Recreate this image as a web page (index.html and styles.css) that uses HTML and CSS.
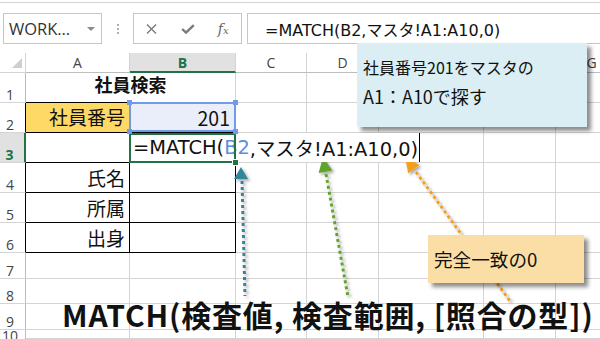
FILE: index.html
```html
<!DOCTYPE html>
<html lang="ja">
<head>
<meta charset="utf-8">
<title>MATCH</title>
<link rel="stylesheet" href="styles.css">
</head>
<body>
<div class="topline"></div>
<div class="fbar">
  <div class="namebox"><span>WORK…</span><span class="dd"></span></div>
  <div class="grip"><i></i><i></i><i></i></div>
  <div class="btns">
    <span class="slot"><svg width="11" height="10" viewBox="0 0 11 10"><path d="M1 0.5 L10 9.5 M10 0.5 L1 9.5" stroke="#7a7a7a" stroke-width="1.4" fill="none"/></svg></span>
    <span class="slot"><svg width="14" height="10" viewBox="0 0 14 10"><path d="M1.2 5 L5 8.6 L12.8 1.2" stroke="#7a7a7a" stroke-width="2.4" fill="none"/></svg></span>
    <span class="slot fx"><span class="fxf">f</span><span class="fxx">x</span></span>
  </div>
  <div class="finput">=MATCH(B2,マスタ!A1:A10,0)</div>
</div>

<div class="sheet">
  <div class="c corner"><span class="tri"></span></div>
  <div class="c ch">A</div>
  <div class="c ch sel">B</div>
  <div class="c ch">C</div>
  <div class="c ch">D</div>
  <div class="c ch"></div>
  <div class="c ch"></div>
  <div class="c ch">G</div>

  <div class="c rh">1</div>
  <div class="c title bb">社員検索</div>
  <div class="c"></div><div class="c"></div><div class="c"></div><div class="c"></div><div class="c"></div>

  <div class="c rh blk">2</div>
  <div class="c t lbl yellow">社員番号</div>
  <div class="c t num b2">201<span class="hd h1"></span><span class="hd h2"></span><span class="hd h3"></span><span class="hd h4"></span></div>
  <div class="c"></div><div class="c"></div><div class="c"></div><div class="c"></div><div class="c"></div>

  <div class="c rh sel">3</div>
  <div class="c t"></div>
  <div class="c t b3"><span class="edit">=MATCH(<span class="ref">B2</span>,マスタ!A1:A10,0)</span><span class="gh"></span></div>
  <div class="c"></div><div class="c"></div><div class="c"></div><div class="c"></div><div class="c"></div>

  <div class="c rh blk">4</div>
  <div class="c t lbl">氏名</div>
  <div class="c t"></div>
  <div class="c"></div><div class="c"></div><div class="c"></div><div class="c"></div><div class="c"></div>

  <div class="c rh blk">5</div>
  <div class="c t lbl">所属</div>
  <div class="c t"></div>
  <div class="c"></div><div class="c"></div><div class="c"></div><div class="c"></div><div class="c"></div>

  <div class="c rh blk">6</div>
  <div class="c t lbl">出身</div>
  <div class="c t"></div>
  <div class="c"></div><div class="c"></div><div class="c"></div><div class="c"></div><div class="c"></div>

  <div class="c rh">7</div>
  <div class="c"></div><div class="c"></div><div class="c"></div><div class="c"></div><div class="c"></div><div class="c"></div><div class="c"></div>

  <div class="c rh">8</div>
  <div class="c"></div><div class="c"></div><div class="c"></div><div class="c"></div><div class="c"></div><div class="c"></div><div class="c"></div>

  <div class="c rh">9</div>
  <div class="c"></div><div class="c"></div><div class="c"></div><div class="c"></div><div class="c"></div><div class="c"></div><div class="c"></div>

  <div class="c rh r10">10</div>
  <div class="c"></div><div class="c"></div><div class="c"></div><div class="c"></div><div class="c"></div><div class="c"></div><div class="c"></div>
</div>

<svg class="arrows" width="600" height="339" viewBox="0 0 600 339">
  <defs>
    <filter id="sh" x="-50%" y="-50%" width="200%" height="200%">
      <feDropShadow dx="2" dy="2" stdDeviation="1.4" flood-color="#000" flood-opacity="0.35"/>
    </filter>
  </defs>
  <g filter="url(#sh)">
    <line x1="242" y1="181" x2="245" y2="296" stroke="#31859b" stroke-width="3" stroke-dasharray="3 3"/>
    <polygon points="241,167 234,179 248,179" fill="#31859b"/>
    <line x1="326" y1="174" x2="348" y2="297" stroke="#62a32e" stroke-width="3" stroke-dasharray="3 3"/>
    <polygon points="323,157 332.4,170.4 318.6,173" fill="#62a32e"/>
    <line x1="416" y1="172" x2="510" y2="301" stroke="#f59d1f" stroke-width="3" stroke-dasharray="3 3"/>
    <polygon points="405,157 419.6,165.1 408.2,173.3" fill="#f59d1f"/>
  </g>
</svg>

<div class="note note-blue">
  <div class="l1">社員番号201をマスタの</div>
  <div class="l2">A1：A10で探す</div>
</div>
<div class="note note-orange">完全一致の0</div>

<div class="syntax">MATCH(検査値, 検査範囲, [照合の型])</div>
</body>
</html>
```

FILE: styles.css
```css
html, body {
  margin: 0;
  padding: 0;
}
body {
  width: 600px;
  height: 339px;
  overflow: hidden;
  background: #fff;
  position: relative;
  font-family: "Noto Sans CJK JP", sans-serif;
  color: #111;
}

/* ---------- formula bar ---------- */
.topline {
  height: 1px;
  margin-top: 2px;
  background: #d4d4d4;
}
.fbar {
  display: flex;
  height: 31px;
  margin-top: 10px;
  margin-bottom: 9px;
}
.namebox {
  margin-left: 3px;
  width: 99px;
  box-sizing: border-box;
  border: 1px solid #c6c6c6;
  display: flex;
  align-items: center;
  padding-left: 5px;
  font-family: "Open Sans", sans-serif;
  font-size: 16.5px;
  color: #333;
}
.dd {
  margin-left: auto;
  margin-right: 6px;
  width: 0;
  height: 0;
  border-left: 4px solid transparent;
  border-right: 4px solid transparent;
  border-top: 4px solid #8a8a8a;
}
.grip {
  width: 31px;
  display: flex;
  flex-direction: column;
  align-items: center;
  justify-content: center;
  gap: 2px;
}
.grip i {
  display: block;
  width: 2px;
  height: 2px;
  background: #b0b0b0;
}
.btns {
  width: 109px;
  box-sizing: border-box;
  border: 1px solid #c6c6c6;
  display: flex;
  align-items: center;
}
.slot {
  width: 36px;
  display: flex;
  justify-content: center;
  align-items: center;
}
.fx {
  font-family: "DejaVu Serif", serif;
  font-style: italic;
  color: #666;
  font-size: 14px;
  align-items: baseline;
}
.fxx {
  font-size: 10px;
}
.finput {
  flex: 1;
  margin-left: 5px;
  border: 1px solid #c6c6c6;
  border-right: none;
  display: flex;
  align-items: center;
  padding-left: 17px;
  font-family: "DejaVu Sans", "Noto Sans CJK JP", sans-serif;
  font-size: 16px;
  color: #111;
  white-space: nowrap;
}

/* ---------- sheet ---------- */
.sheet {
  display: grid;
  grid-template-columns: 26px 104px 106px 71px 72px 105px 72px 72px;
  grid-template-rows: 20px 30px 30px 30px 30px 30px 30px 26px 25px 26px 9px;
  overflow: hidden;
}
.c {
  box-sizing: border-box;
  border-right: 1px solid #d4d4d4;
  border-bottom: 1px solid #d4d4d4;
  display: flex;
  align-items: center;
  justify-content: flex-end;
  min-width: 0;
}
.corner {
  align-items: flex-end;
  padding: 0 3px 4px 0;
}
.tri {
  width: 0;
  height: 0;
  border-left: 10px solid transparent;
  border-bottom: 10px solid #cfcfcf;
}
.ch {
  justify-content: center;
  font-family: "Open Sans", sans-serif;
  font-size: 14px;
  color: #444;
  border-bottom-color: #bdbdbd;
}
.ch.sel {
  background: #e1e1e1;
  color: #217346;
  font-weight: bold;
  border-bottom: 2px solid #217346;
}
.rh {
  justify-content: center;
  align-items: flex-end;
  padding-right: 5px;
  font-family: "Open Sans", sans-serif;
  font-size: 14px;
  line-height: 14px;
  color: #444;
  border-right-color: #bdbdbd;
}
.rh.blk {
  border-right-color: #000;
}
.rh.sel {
  background: #e1e1e1;
  color: #217346;
  font-weight: bold;
  border-right: 2px solid #217346;
}
.rh.r10 {
  align-items: flex-start;
  padding-top: 1px;
  line-height: 10px;
  overflow: hidden;
  border-bottom: none;
}

.title {
  grid-column: span 2;
  justify-content: center;
  font-weight: bold;
  font-size: 18px;
  padding-bottom: 7px;
}
.bb {
  border-bottom-color: #000;
}
.t {
  border-right-color: #000;
  border-bottom-color: #000;
}
.lbl {
  font-size: 19px;
  padding-right: 4px;
}
.yellow {
  background: #ffd966;
  padding-bottom: 2px;
}
.num {
  font-size: 19.5px;
  padding-right: 5px;
}

/* B2: reference highlight */
.b2 {
  position: relative;
  background: #e9eefa;
}
.b2::after {
  content: "";
  position: absolute;
  left: -1px;
  top: -1px;
  width: 107px;
  height: 30px;
  box-sizing: border-box;
  border: 2px solid #6f9be8;
}
.hd {
  position: absolute;
  width: 5px;
  height: 5px;
  background: #6f9be8;
  z-index: 3;
}
.h1 { left: -3px; top: -3px; }
.h2 { right: -3px; top: -3px; }
.h3 { left: -3px; bottom: -2px; }
.h4 { right: -3px; bottom: -2px; }

/* B3: editing cell */
.b3 {
  position: relative;
  justify-content: flex-start;
  overflow: visible;
}
.b3::after {
  content: "";
  position: absolute;
  left: -1px;
  top: 0;
  width: 107px;
  height: 30px;
  box-sizing: border-box;
  border: 2px solid #217346;
  z-index: 2;
}
.edit {
  position: relative;
  z-index: 1;
  height: 29px;
  display: flex;
  align-items: center;
  padding-left: 3px;
  padding-right: 1px;
  background: #fff;
  white-space: nowrap;
  border-right: 1px solid #000;
  font-family: "DejaVu Sans", "Noto Sans CJK JP", sans-serif;
  font-size: 19.4px;
  color: #111;
}
.ref {
  color: #5b8ee0;
}
.gh {
  position: absolute;
  right: -4px;
  bottom: -4px;
  width: 5px;
  height: 5px;
  background: #217346;
  border: 1px solid #fff;
  z-index: 3;
}

/* ---------- overlays ---------- */
.arrows {
  position: absolute;
  left: 0;
  top: 0;
  pointer-events: none;
}
.note {
  position: absolute;
  box-shadow: 4px 4px 4px rgba(0, 0, 0, 0.45);
  box-sizing: border-box;
  white-space: nowrap;
}
.note-blue {
  left: 357px;
  top: 43px;
  width: 230px;
  height: 84px;
  background: #daeef3;
  padding: 10px 0 0 6px;
}
.note-blue .l1 {
  font-size: 16px;
  line-height: 29px;
}
.note-blue .l2 {
  font-size: 18px;
  line-height: 29px;
}
.note-orange {
  left: 428px;
  top: 235px;
  width: 156px;
  height: 48px;
  background: #fadea5;
  padding-left: 6px;
  font-size: 18.6px;
  line-height: 48px;
}
.syntax {
  position: absolute;
  left: 62px;
  top: 299px;
  font-size: 30px;
  line-height: 30px;
  font-weight: bold;
  letter-spacing: 0.85px;
  color: #111;
  white-space: nowrap;
}
```
